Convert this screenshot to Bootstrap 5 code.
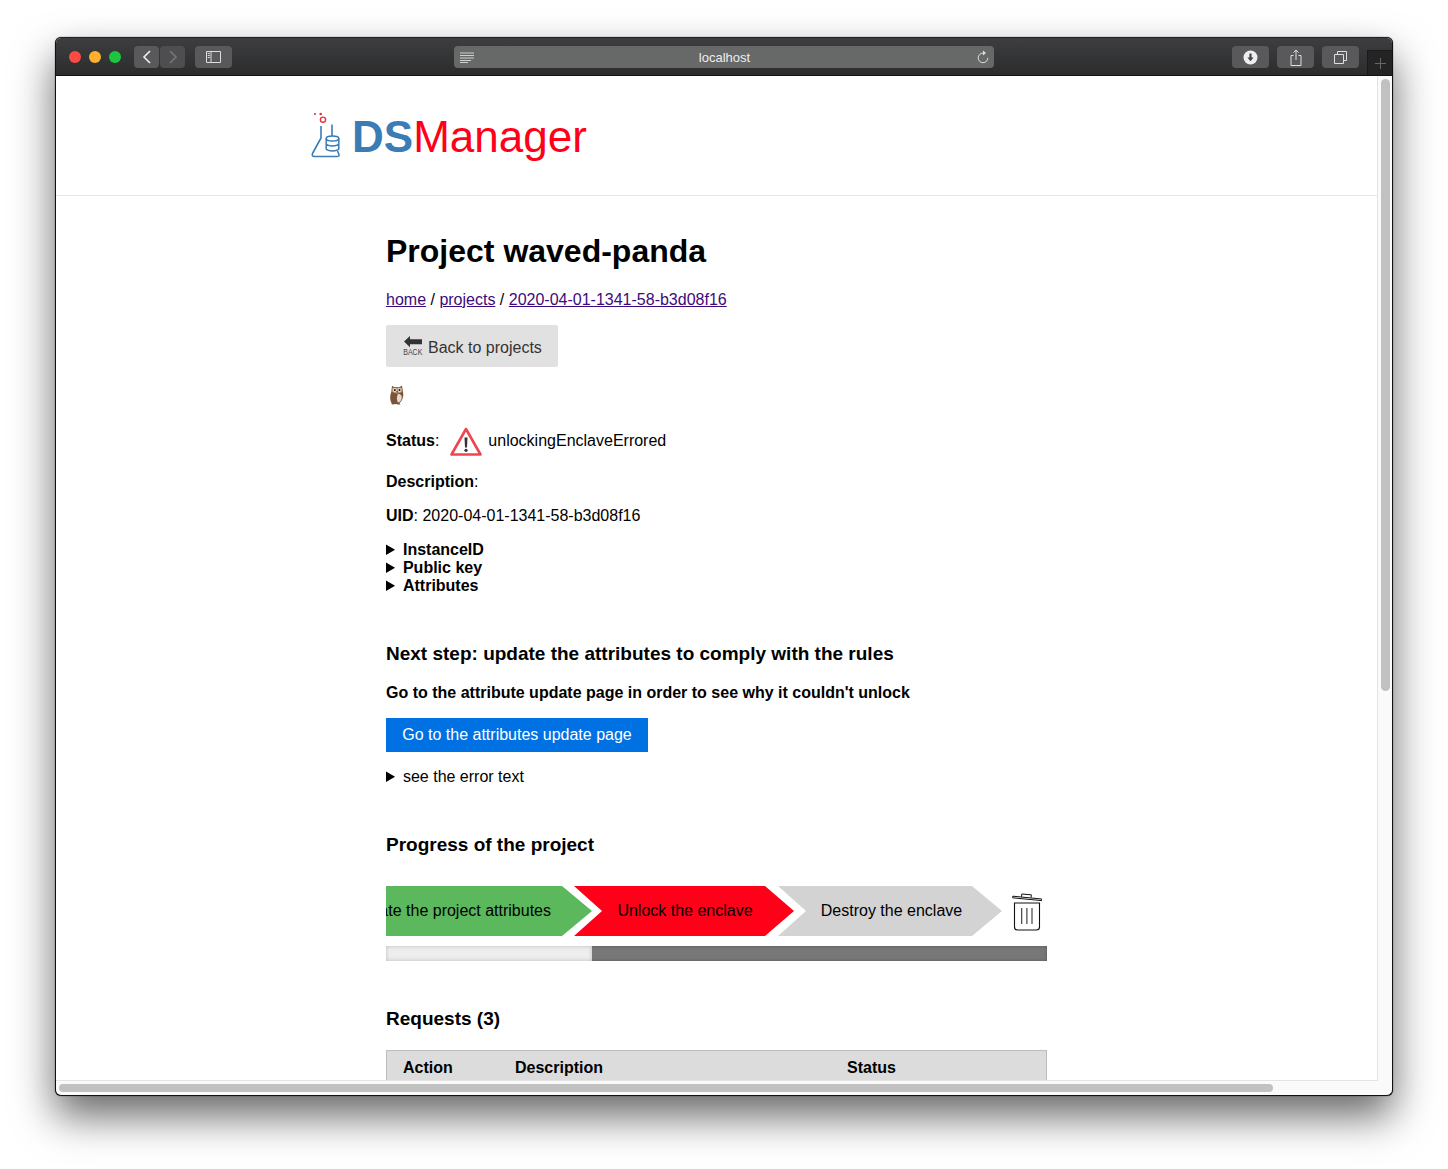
<!DOCTYPE html>
<html lang="en">
<head>
<meta charset="utf-8">
<title>Project waved-panda</title>
<link href="https://cdn.jsdelivr.net/npm/bootstrap@5.3.0/dist/css/bootstrap.min.css" rel="stylesheet">
<style>
html,body{height:100%;overflow:hidden}
body{background:#fff;font-family:"Liberation Sans",Arial,sans-serif;font-size:16px;color:#000;padding:37px 55px 0}
.mac-win{width:1338px;height:1059px;border-radius:6px;box-shadow:0 20px 42px rgba(0,0,0,.6),0 0 1px #000;overflow:hidden;border:1px solid #111;border-top-color:#222;background:#fafafa}
.mac-bar{height:38px;background:linear-gradient(#3d3e40,#2c2c2d);padding:8px 0 0 13px;flex:none;border-bottom:1px solid #111}
.dot{width:12px;height:12px;border-radius:50%;margin-top:5px;margin-right:8px;flex:none}
.dot-r{background:#fc4a45}.dot-y{background:#fdb02e}.dot-g{background:#1cc63f}
.mbtn{height:22px;background:#59595b;border-radius:4px;flex:none}
.mbtn-back{width:25px;margin-left:5px}
.mbtn-fwd{width:25px;margin-left:1px;background:#4e4e50}
.mbtn-side{width:37px;margin-left:10px}
.url-box{width:540px;height:22px;margin-left:222px;background:#676868;border-radius:4px;color:#eee;font-size:13px;padding:0 5px;flex:none}
.url-box span{flex:1;text-align:center;line-height:25px;margin-right:2px}
.mbtn-r{width:37px;margin-left:8px}
.first-r{margin-left:238px}
.tab-plus{width:26px;height:25px;margin-left:8px;margin-top:4px;background:#242425;border:1px solid #1a1a1a;border-right:0;border-bottom:0;flex:none}
.mac-mid{height:1005px;flex:none}
.page-view{width:1322px;height:1005px;overflow:hidden;background:#fff;border-right:1px solid #e4e4e4;border-bottom:1px solid #e4e4e4;flex:none}
.vtrack{flex:1;padding:3px 2px 0 3px}
.vthumb{height:612px;width:9px;background:#c1c1c1;border-radius:5px}
.htrack{flex:1;padding:3px 0 0 3px}
.hthumb{height:8px;width:1214px;background:#c1c1c1;border-radius:4px}
.site-head{height:120px;border-bottom:1px solid #e6e6e6;padding:33px 0 0 254px}
.logo-mark{flex:none}
.logo-txt{font-size:44px;line-height:50px;margin:3px 0 0 10px}
.logo-ds{color:#3a7cb6;font-weight:700}
.logo-mg{color:#ff0018}
.main-col{width:661px;margin-left:330px}
.ptitle{font-size:32px;font-weight:700;line-height:37px;margin:37px 0 21px}
.crumbs{line-height:18px;margin-bottom:16px}
.crumbs a{color:#3c0a7d}
.btn-back{background:#e1e1e1;color:#333;border-radius:2px;height:42px;width:172px;padding:3px 0 0 17px;border:0;font-size:16px;gap:5px}
.btn-back:hover{background:#e1e1e1;color:#333}
.back-ic{margin-top:-1px;flex:none}
.owl-row{height:20px;margin:15px 0 24px 3px}
.stat-row{height:30px;margin-bottom:17px}
.warn-ic{margin:0 6px 0 11px}
.ln{line-height:18px;margin-bottom:16px}
.sum-list{line-height:18px;font-weight:700}
.sec-h{font-size:19px;font-weight:700;line-height:23px;margin:0}
.btn-go{background:#0071e3;color:#fff;border:0;border-radius:0;height:34px;width:262px;padding:0;font-size:16px}
.btn-go:hover{background:#0071e3;color:#fff}
.steps{height:50px;overflow:hidden;width:626px;flex:none}
.stp{height:50px;flex:none;line-height:49px;text-align:center;white-space:nowrap}
.stp-g{background:#5cb85c;width:206px;text-align:left;text-indent:-36px;clip-path:polygon(0 0,176px 0,206px 25px,176px 50px,0 50px)}
.stp-r{background:#ff0018;width:220px;margin-left:-18px;padding-left:2px;clip-path:polygon(0 0,191px 0,220px 25px,191px 50px,0 50px,28px 25px)}
.stp-x{background:#d3d3d3;width:224px;margin-left:-16px;padding-left:3px;clip-path:polygon(0 0,194px 0,224px 25px,194px 50px,0 50px,28px 25px)}
.track{height:15px;background:#777;box-shadow:inset 0 0 3px #555;margin-top:10px}
.track-on{height:15px;width:206px;background:#eee;box-shadow:inset 0 0 4px #bbb}
.req-table{margin:0;width:661px;table-layout:fixed;--bs-table-bg:#dcdcdc;border:1px solid #bdbdbd}
.req-table th{height:34px;padding:0 0 0 16px;vertical-align:middle;font-size:16px;line-height:33px;border:0;color:#000}
.nx-h{margin-top:47px}
.go-txt{line-height:18px;margin:19px 0 16px}
.err-d{line-height:18px;margin-top:16px}
.pr-h{margin-top:47px;margin-bottom:30px}
.trash-i{margin-top:2px;flex:none}
.rq-h{margin-top:46px;margin-bottom:20px}
.th-a{width:112.5px}.th-d{width:332px}
</style>
</head>
<body>
<div class="mac-win d-flex flex-column">
  <div class="mac-bar d-flex">
    <i class="dot dot-r"></i><i class="dot dot-y"></i><i class="dot dot-g"></i>
    <div class="mbtn mbtn-back d-flex align-items-center justify-content-center"><svg width="10" height="14" viewBox="0 0 10 14"><path d="M8 1 2 7l6 6" fill="none" stroke="#eee" stroke-width="1.6"/></svg></div>
    <div class="mbtn mbtn-fwd d-flex align-items-center justify-content-center"><svg width="10" height="14" viewBox="0 0 10 14"><path d="M2 1l6 6-6 6" fill="none" stroke="#777" stroke-width="1.6"/></svg></div>
    <div class="mbtn mbtn-side d-flex align-items-center justify-content-center"><svg width="15" height="12" viewBox="0 0 15 12"><path d="M.5.5h14v11H.5zM5 .5v11" fill="none" stroke="#ddd"/><path d="M1.800 2.500h2M1.800 4.500h2M1.800 6.500h2" stroke="#ddd"/></svg></div>
    <div class="url-box d-flex align-items-center">
      <svg width="15" height="11" viewBox="0 0 15 11"><path d="M1 1h14M1 3.500h14M1 6h14M1 8.500h11M1 10.500h8" stroke="#ddd" stroke-width=".9"/></svg>
      <span>localhost</span>
      <svg width="12" height="14" viewBox="0 0 12 14"><path d="M6 3.100a4.800 4.800 0 1 0 4.800 4.800" fill="none" stroke="#ddd"/><path d="M6 .6l3 2.500-3 2.500z" fill="#ddd"/></svg>
    </div>
    <div class="mbtn mbtn-r first-r d-flex align-items-center justify-content-center"><svg width="15" height="15" viewBox="0 0 15 15"><circle cx="7.500" cy="7.500" r="7" fill="#eee"/><path d="M6.400 3.500h2.200v4h2L7.500 11.300 4.400 7.500h2z" fill="#444"/></svg></div>
    <div class="mbtn mbtn-r d-flex align-items-center justify-content-center"><svg width="12" height="17" viewBox="0 0 12 17"><path d="M3.500 6.500H1v10h10v-10H8.500M6 11V1M3.500 3.500 6 1l2.500 2.500" fill="none" stroke="#ddd"/></svg></div>
    <div class="mbtn mbtn-r d-flex align-items-center justify-content-center"><svg width="13" height="13" viewBox="0 0 13 13"><path d="M.5 3.500h9v9h-9zM3.500 3.500v-3h9v9h-3" fill="none" stroke="#ddd"/></svg></div>
    <div class="tab-plus d-flex align-items-center justify-content-center"><svg width="11" height="11" viewBox="0 0 11 11"><path d="M5.500 0v11M0 5.500h11" stroke="#666"/></svg></div>
  </div>
  <div class="mac-mid d-flex">
    <div class="page-view">
      <header class="site-head d-flex align-items-start">
        <svg width="32" height="49" viewBox="0 0 32 49" class="logo-mark"><circle cx="5" cy="5" r="1.100" fill="#e8323c"/><circle cx="10.700" cy="5" r="1.300" fill="#e8323c"/><circle cx="13" cy="10.700" r="2.600" fill="none" stroke="#e8323c" stroke-width="1.400"/><path d="M11 17v12L2.500 44.500q-1 3 2 3H27q2.500 0 2-2L27.500 42M22 15.500V27" fill="none" stroke="#3a7cb6" stroke-width="1.600" stroke-linejoin="round"/><ellipse cx="22.500" cy="29.500" rx="6.300" ry="2.500" fill="none" stroke="#3a7cb6" stroke-width="1.500"/><path d="M16.200 29.500V40c2 2.500 10.600 2.500 12.600 0V29.500M16.200 35c2 2.500 10.600 2.500 12.600 0" fill="none" stroke="#3a7cb6" stroke-width="1.500"/></svg>
        <div class="logo-txt"><span class="logo-ds">DS</span><span class="logo-mg">Manager</span></div>
      </header>
      <main class="main-col">
        <h1 class="ptitle">Project waved-panda</h1>
        <div class="crumbs"><a href="#">home</a> / <a href="#">projects</a> / <a href="#">2020-04-01-1341-58-b3d08f16</a></div>
        <button type="button" class="btn btn-back d-flex align-items-center">
          <svg width="20" height="22" viewBox="0 0 20 22" class="back-ic"><path d="M1 5.500 7 0v3.200h12v5H7v3z" fill="#333"/><text transform="translate(.3 19) scale(1 1.250)" font-size="7" font-family="Liberation Sans" fill="#444">BACK</text></svg>
          <span>Back to projects</span>
        </button>
        <div class="owl-row"><svg width="16" height="20" viewBox="0 0 16 20"><path d="M3 .8 5 2h5.500L13 .8 14 7c1 5-1 9-3.500 11l1 1.500H8.500L7.500 19 3 19.500 2 17C.5 13 1.500 9 2.300 7z" fill="#7a5338"/><path d="M9 9c3 0 4.500 2 3.500 5-.6 2-2 3.500-3.500 3.500-1.500-2-1.500-6 0-8.500z" fill="#e5dace"/><path d="M3 3c2-.8 8-.8 10 0l.5 3.500C11 9 5 9 3 6.500z" fill="#b79475"/><circle cx="5.800" cy="5" r="1.900" fill="#e9dccb"/><circle cx="10.500" cy="5" r="1.900" fill="#e9dccb"/><circle cx="5.800" cy="5" r="1" fill="#1a120c"/><circle cx="10.500" cy="5" r="1" fill="#1a120c"/><path d="M7.500 6h1.300L8.100 8z" fill="#5a4030"/></svg></div>
        <div class="stat-row d-flex align-items-center"><span><strong>Status</strong>:</span>
          <svg width="32" height="29" viewBox="0 0 32 29" class="warn-ic"><path d="M16 2 1.500 27.500h29z" fill="none" stroke="#ee4650" stroke-width="2.600" stroke-linejoin="round"/><path d="M14.500 10.500h3l-.5 10h-2z" fill="#333"/><circle cx="16" cy="23.300" r="1.600" fill="#333"/></svg>
          <span>unlockingEnclaveErrored</span></div>
        <div class="ln"><strong>Description</strong>:</div>
        <div class="ln"><strong>UID</strong>: 2020-04-01-1341-58-b3d08f16</div>
        <div class="sum-list">
          <details><summary>InstanceID</summary></details>
          <details><summary>Public key</summary></details>
          <details><summary>Attributes</summary></details>
        </div>
        <h3 class="sec-h nx-h">Next step: update the attributes to comply with the rules</h3>
        <div class="go-txt"><strong>Go to the attribute update page in order to see why it couldn't unlock</strong></div>
        <button type="button" class="btn btn-go">Go to the attributes update page</button>
        <details class="err-d"><summary>see the error text</summary></details>
        <h3 class="sec-h pr-h">Progress of the project</h3>
        <div class="d-flex align-items-center">
          <div class="steps d-flex">
            <div class="stp stp-g">Update the project attributes</div>
            <div class="stp stp-r">Unlock the enclave</div>
            <div class="stp stp-x">Destroy the enclave</div>
          </div>
          <svg width="30" height="38" viewBox="0 0 30 38" class="trash-i"><path d="M.8 3.200 29.700 6 29.500 7.600.6 4.800zM9.500 3.800l.3-2.800 9.500.8-.2 2.800" fill="none" stroke="#111" stroke-width="1"/><path d="M2.500 10h25v24a3 3 0 0 1-3 3h-19a3 3 0 0 1-3-3z" fill="none" stroke="#111" stroke-width="1.100"/><path d="M9.700 15v16M14.900 15v16M20 15v16" stroke="#333" stroke-width="1.100"/></svg>
        </div>
        <div class="track"><div class="track-on"></div></div>
        <h3 class="sec-h rq-h">Requests (3)</h3>
        <table class="table req-table"><thead><tr><th class="th-a">Action</th><th class="th-d">Description</th><th>Status</th></tr></thead></table>
      </main>
    </div>
    <div class="vtrack"><div class="vthumb"></div></div>
  </div>
  <div class="htrack"><div class="hthumb"></div></div>
</div>
</body>
</html>
